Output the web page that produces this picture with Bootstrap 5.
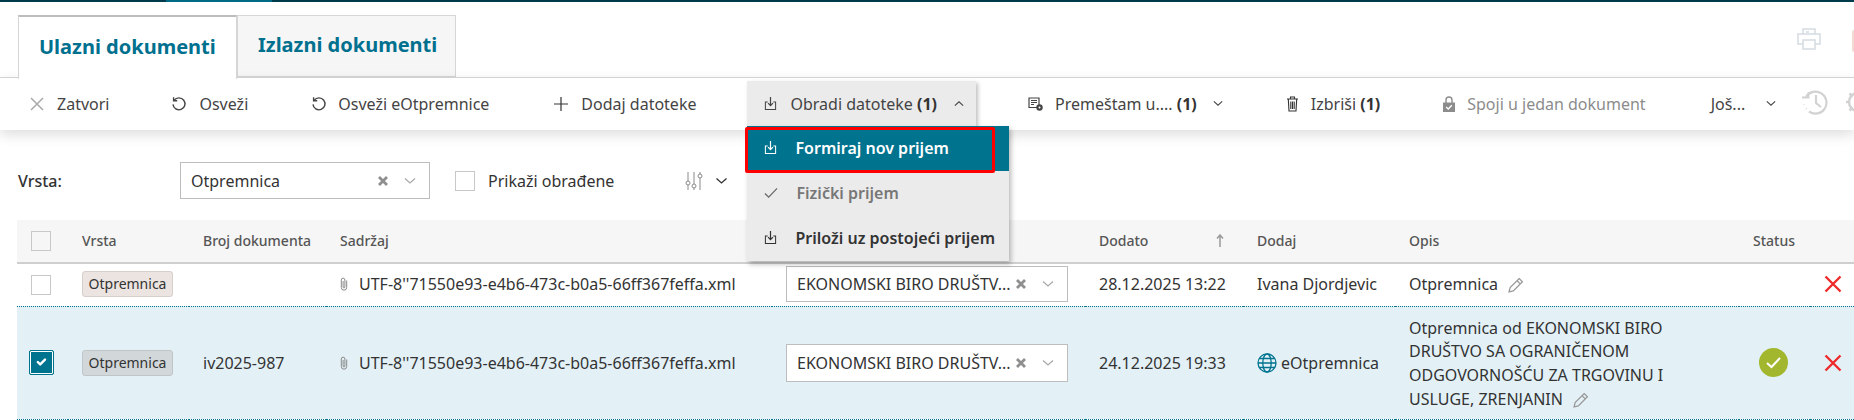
<!DOCTYPE html>
<html lang="sr">
<head>
<meta charset="utf-8">
<title>Ulazni dokumenti</title>
<link href="https://cdn.jsdelivr.net/npm/bootstrap@5.3.0/dist/css/bootstrap.min.css" rel="stylesheet">
<style>
html,body{height:420px;overflow:hidden;background:#fff}
body{font-family:"Noto Sans","Open Sans",sans-serif;font-size:16px;color:#333}
svg{flex:none;display:block}
.stripe{height:2px;background:#003b4b}
.stripe-on{width:106px;height:2px;margin-left:166px;background:#006a85}
.tabhead{height:75px;padding:13px 0 0 18px}
.tabbar{height:63px}
.doc-tab{height:63px;width:219px;display:flex;align-items:center;padding:0 0 2px 20px;font-size:20px;font-weight:700;color:#00708f;text-decoration:none;border:1px solid #d6d6d6;background:#f6f6f6;border-bottom-width:2px}
.doc-tab.on{background:#fff;border-top:2px solid #bdbdbd;border-bottom:0;height:64px;position:relative;z-index:3}
.printbox{position:absolute;left:1797px;top:26px}
.clipbox{position:absolute;left:1852px;top:28px;width:10px;height:22px;border:2px solid #f0dcd2;border-radius:2px}
.toolstrip{height:53px;border-top:1px solid #d2d2d2;background:#fff;box-shadow:0 5px 12px rgba(0,0,0,.13);position:relative;z-index:2}
.toolstrip>.tool{height:45px;margin-top:3px;display:flex;align-items:center;gap:12px;padding:0 12px 0 17px;white-space:nowrap;color:#444}
.tool b{font-weight:700;color:#333}
.toolstrip>.tool.mute{color:#8c8c8c}
.toolstrip>.tool.open{background:#ebebeb;box-shadow:2px 2px 4px rgba(0,0,0,.25);position:relative;gap:13px;margin-left:39px}
.tool .chev{margin-left:4px}
.m-b{margin-left:34px}
.m-p{margin-left:35px}
.m-j{margin-left:36px}
.first-tool{margin-left:13px;gap:13px!important}
.second-tool{margin-left:33px}
.tight-gap{gap:11px!important}
.slidemenu{position:absolute;left:0;top:45px;width:262px;background:#ebebeb;box-shadow:2px 3px 5px rgba(0,0,0,.28);z-index:5}
.slideitem{height:45px;display:flex;align-items:center;padding:0 0 2px 17px;gap:18px;font-weight:600;color:#333}
.slideitem.act{background:#00738f;color:#fff}
.slideitem.off{color:#777}
.redmark{position:absolute;left:-2px;top:1px;width:250px;height:46px;border:3px solid #f00;border-radius:2px;pointer-events:none}
.sideicon{margin-top:11px}
.hist-icon{margin-left:13px}
.gear-icon{margin-left:16px}
.more-chev{margin-left:9px!important}
.filterbar{height:37px;margin:32px 0 0 18px;display:flex;align-items:center}
.filterlabel{width:162px;font-weight:500}
.filter-check{margin-left:25px!important}
.filter-label{margin:0 71px 0 13px;white-space:nowrap}
.filter-chev{margin-left:12px}
.pickbox{display:flex;align-items:center;background:#fff;border:1px solid #bdbdbd;padding:0 13px 0 10px;white-space:nowrap}
.pickbox .pick-text{flex:1}
.pickbox .pale{color:#aaa}
.pickbox.wide{width:250px;height:37px}
.pickbox.tall{width:282px;height:36px}
.pickbox.taller{height:38px}
.form-check-input.plainbox{width:20px;height:20px;margin:0;border:1px solid #c8c8c8;border-radius:0;background-color:#fff;display:block}
.headbox{background-color:#f6f6f6!important}
.form-check-input.plainbox:checked{width:25px;height:25px;margin-left:-2px;background-color:#00738f;border:1px solid #00738f;border-radius:2px;box-shadow:inset 0 0 0 1px #fff;background-size:70%}
.doc-wrap{margin:21px 0 0 17px}
table.doc-table{table-layout:fixed;width:1837px;margin:0;--bs-table-bg:transparent;--bs-table-color:#333}
.doc-table th{height:43px;background:#f6f6f6;border-bottom:2px solid #cfcfcf;font-size:14px;font-weight:500;color:#555;padding:0 0 2px 14px;vertical-align:middle}
.doc-table th:first-child{padding-bottom:0}
.doc-table td{padding:0 0 0 14px;vertical-align:middle;border-bottom:1px dotted #00738f;white-space:nowrap}
.doc-table tr.one td{height:43px;padding-bottom:2px}
.doc-table tr.one td:first-child{padding-bottom:0}
.doc-table tr.two td{height:113px;background:#e3f1f7}
.kind-tag{display:inline-block;width:91px;height:26px;line-height:24px;text-align:center;font-size:14px;border:1px solid #d8cfcb;border-radius:3px;background:#ebe4e1}
.two .kind-tag{background:#d2d7da;border-color:#c0c5c8}
.clip-row{display:flex;align-items:center;gap:11px}
.sort-head{display:flex;justify-content:space-between;padding-right:19px}
.desc-text{white-space:normal;line-height:23.7px;width:275px;padding-top:3px}
.pen{display:inline-block;vertical-align:-3px;margin-left:6px}
.ok-mark{margin-left:6px}
.flip{transform:rotate(180deg)}
</style>
</head>
<body>
<svg class="d-none" xmlns="http://www.w3.org/2000/svg">
<symbol id="i-refresh" viewBox="0 0 16 16"><path d="M3.200 4.200A6 6 0 1 1 2 8.400" fill="none" stroke="currentColor" stroke-width="1.400"/><path d="M2.600 1.200v3.600h3.600" fill="none" stroke="currentColor" stroke-width="1.400"/></symbol>
<symbol id="i-tray" viewBox="0 0 14 16"><path d="M4 6.500H1.500v8h11v-8H10" fill="none" stroke="currentColor" stroke-width="1.100"/><path d="M7 1v9M4.400 7.600 7 10.400l2.600-2.800" fill="none" stroke="currentColor" stroke-width="1.300"/></symbol>
<symbol id="i-chev" viewBox="0 0 12 8"><path d="M1 1.500 6 6l5-4.500" fill="none" stroke="currentColor" stroke-width="1.300"/></symbol>
<symbol id="i-clear" viewBox="0 0 10 10"><path d="M1 1l8 8M9 1 1 9" stroke="#8f8f8f" stroke-width="2.800"/></symbol>
<symbol id="i-clip" viewBox="0 0 8 14"><path d="M6.700 3.500v7a2.700 2.700 0 0 1-5.400 0V3a1.800 1.800 0 0 1 3.600 0v7a.9.9 0 0 1-1.800 0V4" fill="none" stroke="#8a8a8a" stroke-width="1"/></symbol>
<symbol id="i-pen" viewBox="1 1 15 14"><path d="M2 14l1-4L11.500 1.500l3 3L6 13z M9.500 3.500l3 3" fill="none" stroke="#999" stroke-width="1.200"/></symbol>
<symbol id="i-redx" viewBox="0 0 18 18"><path d="M1.500 1.500l15 15M16.500 1.500l-15 15" stroke="#ee2b2b" stroke-width="2.400"/></symbol>
</svg>
<div class="stripe"><div class="stripe-on"></div></div>
<div class="tabhead position-relative">
  <div class="tabbar d-flex">
    <a class="doc-tab on" href="#">Ulazni dokumenti</a>
    <a class="doc-tab" href="#">Izlazni dokumenti</a>
  </div>
  <svg class="printbox" width="24" height="22" viewBox="0 0 24 22" fill="none" stroke="#d5dbe2" stroke-width="1.500"><path d="M6 6V1h12v5M6 16H1V6h22v10h-5"/><path d="M6 12h12v9H6z"/><path d="M9 4h3"/></svg>
  <div class="clipbox"></div>
</div>
<div class="toolstrip d-flex">
  <div class="tool first-tool"><svg width="14" height="14" viewBox="0 0 14 14"><path d="M1 1l12 12M13 1 1 13" stroke="#a9a9a9" stroke-width="1.500"/></svg><span>Zatvori</span></div>
  <div class="tool second-tool"><svg width="16" height="16"><use href="#i-refresh"/></svg><span>Osveži</span></div>
  <div class="tool m-b tight-gap"><svg width="16" height="16"><use href="#i-refresh"/></svg><span>Osveži eOtpremnice</span></div>
  <div class="tool m-p"><svg width="16" height="16" viewBox="0 0 16 16"><path d="M8 1v14M1 8h14" stroke="#333" stroke-width="1.200"/></svg><span>Dodaj datoteke</span></div>
  <div class="tool open">
    <svg width="13" height="15"><use href="#i-tray"/></svg><span>Obradi datoteke <b>(1)</b></span>
    <svg class="chev flip" width="10" height="7"><use href="#i-chev"/></svg>
    <div class="slidemenu">
      <div class="slideitem act"><svg width="13" height="15"><use href="#i-tray"/></svg><span>Formiraj nov prijem</span></div>
      <div class="slideitem off"><svg width="14" height="12" viewBox="0 0 15 12"><path d="M1 6.500 5 10.500 14 1" fill="none" stroke="#666" stroke-width="1.300"/></svg><span>Fizički prijem</span></div>
      <div class="slideitem"><svg width="13" height="15"><use href="#i-tray"/></svg><span>Priloži uz postojeći prijem</span></div>
      <span class="redmark"></span>
    </div>
  </div>
  <div class="tool m-p"><svg width="15" height="14" viewBox="0 0 15 14"><path d="M1 1h10v9.500H1z" fill="none" stroke="#444" stroke-width="1.200"/><path d="M3 3.500h6M3 5.500h6M3 7.500h3" stroke="#444"/><circle cx="11.500" cy="10.500" r="3.200" fill="#444"/><circle cx="11.500" cy="10.500" r="1" fill="#fff"/></svg><span>Premeštam u.... <b>(1)</b></span><svg class="chev" width="10" height="7"><use href="#i-chev"/></svg></div>
  <div class="tool m-b"><svg width="13" height="16" viewBox="0 0 13 16" fill="none" stroke="#333" stroke-width="1.100"><path d="M1 3h11M4.500 3V1h4v2M2.300 3l.7 12h7l.7-12M4.800 5.500v7.500M6.500 5.500v7.500M8.200 5.500v7.500"/></svg><span>Izbriši <b>(1)</b></span></div>
  <div class="tool mute m-b"><svg width="12" height="16" viewBox="0 0 12 16"><path d="M3 7V4a3 3 0 0 1 6 0v3" fill="none" stroke="#8c8c8c" stroke-width="1.400"/><path d="M0 6.500h12V16H0z" fill="#8c8c8c"/><path d="M3.200 11 5.300 13 8.800 9.200" fill="none" stroke="#fff" stroke-width="1.300"/></svg><span>Spoji u jedan dokument</span></div>
  <div class="tool m-j"><span>Još...</span><svg class="chev more-chev" width="10" height="7"><use href="#i-chev"/></svg></div>
  <svg class="sideicon hist-icon" width="28" height="26" viewBox="0 0 28 26" fill="none" stroke="#d2d2d2" stroke-width="2.200"><path d="M5 8a11 11 0 1 1 3 14.500"/><path d="M15 6v8l5 4"/><path d="M1 8.500h6.500V3" stroke-width="1.800"/><path d="M3 15.500v.5M5 19.500l.5.500" stroke-width="1.800"/></svg>
  <svg class="sideicon gear-icon" width="20" height="26" viewBox="0 0 20 26" fill="none" stroke="#d2d2d2" stroke-width="2.500"><circle cx="13" cy="13" r="9"/><path d="M13 1v4M13 21v4M1 13h4M4.500 4.500l3 3M4.500 21.500l3-3"/></svg>
</div>
<div class="filterbar">
  <div class="filterlabel">Vrsta:</div>
  <div class="pickbox wide"><span class="pick-text">Otpremnica</span><svg width="10" height="10" class="me-3"><use href="#i-clear"/></svg><svg width="12" height="8" class="pale"><use href="#i-chev"/></svg></div>
  <input class="form-check-input plainbox filter-check" type="checkbox" aria-label="Prikaži obrađene">
  <span class="filter-label">Prikaži obrađene</span>
  <svg width="18" height="18" viewBox="0 0 18 18" fill="none" stroke="#8a8a8a"><path d="M3 0v18M9 0v18M15 0v18"/><circle cx="3" cy="11" r="2" fill="#fff"/><circle cx="9" cy="14" r="2" fill="#fff"/><circle cx="15" cy="4" r="2" fill="#fff"/></svg>
  <svg class="filter-chev" width="13" height="8"><use href="#i-chev"/></svg>
</div>
<div class="doc-wrap">
<table class="table doc-table">
  <colgroup><col style="width:51px"><col style="width:121px"><col style="width:137px"><col style="width:446px"><col style="width:313px"><col style="width:158px"><col style="width:152px"><col style="width:344px"><col style="width:71px"><col></colgroup>
  <thead><tr>
    <th><input class="form-check-input plainbox headbox" type="checkbox" aria-label="Svi"></th>
    <th>Vrsta</th><th>Broj dokumenta</th><th>Sadržaj</th><th></th>
    <th><div class="sort-head"><span>Dodato</span><svg width="8" height="13" viewBox="0 0 8 13" class="mt-1"><path d="M4 13V1M1 4.500 4 1l3 3.500" fill="none" stroke="#999" stroke-width="1.500"/></svg></div></th>
    <th>Dodaj</th><th>Opis</th><th>Status</th><th></th>
  </tr></thead>
  <tbody>
    <tr class="one">
      <td><input class="form-check-input plainbox" type="checkbox" aria-label="Izaberi"></td>
      <td><span class="kind-tag">Otpremnica</span></td><td></td>
      <td><div class="clip-row"><svg width="8" height="14"><use href="#i-clip"/></svg><span>UTF-8''71550e93-e4b6-473c-b0a5-66ff367feffa.xml</span></div></td>
      <td><div class="pickbox tall"><span class="pick-text">EKONOMSKI BIRO DRUŠTV...</span><svg width="10" height="10" class="me-3"><use href="#i-clear"/></svg><svg width="12" height="8" class="pale"><use href="#i-chev"/></svg></div></td>
      <td>28.12.2025 13:22</td><td>Ivana Djordjevic</td>
      <td>Otpremnica <svg class="pen d-inline" width="16" height="15"><use href="#i-pen"/></svg></td>
      <td></td>
      <td><svg width="18" height="18"><use href="#i-redx"/></svg></td>
    </tr>
    <tr class="two">
      <td><input class="form-check-input plainbox" type="checkbox" checked aria-label="Izaberi"></td>
      <td><span class="kind-tag">Otpremnica</span></td><td>iv2025-987</td>
      <td><div class="clip-row"><svg width="8" height="14"><use href="#i-clip"/></svg><span>UTF-8''71550e93-e4b6-473c-b0a5-66ff367feffa.xml</span></div></td>
      <td><div class="pickbox tall taller"><span class="pick-text">EKONOMSKI BIRO DRUŠTV...</span><svg width="10" height="10" class="me-3"><use href="#i-clear"/></svg><svg width="12" height="8" class="pale"><use href="#i-chev"/></svg></div></td>
      <td>24.12.2025 19:33</td>
      <td><div class="d-flex align-items-center gap-1"><svg width="20" height="20" viewBox="0 0 20 20" fill="none" stroke="#00738f" stroke-width="1.300"><circle cx="10" cy="10" r="9"/><ellipse cx="10" cy="10" rx="4.200" ry="9"/><path d="M1 10h18M2.300 5.500h15.400M2.300 14.500h15.400"/></svg><span>eOtpremnica</span></div></td>
      <td><div class="desc-text">Otpremnica od EKONOMSKI BIRO DRUŠTVO SA OGRANIČENOM ODGOVORNOŠĆU ZA TRGOVINU I USLUGE, ZRENJANIN <svg class="pen d-inline" width="16" height="15"><use href="#i-pen"/></svg></div></td>
      <td><svg class="ok-mark" width="29" height="29" viewBox="0 0 29 29"><circle cx="14.500" cy="14.500" r="14.500" fill="#a2b72e"/><path d="M8 15l4.500 4L21 10" fill="none" stroke="#fff" stroke-width="2"/></svg></td>
      <td><svg width="18" height="18"><use href="#i-redx"/></svg></td>
    </tr>
  </tbody>
</table>
</div>
<script src="https://cdn.jsdelivr.net/npm/bootstrap@5.3.0/dist/js/bootstrap.bundle.min.js"></script>
</body>
</html>
